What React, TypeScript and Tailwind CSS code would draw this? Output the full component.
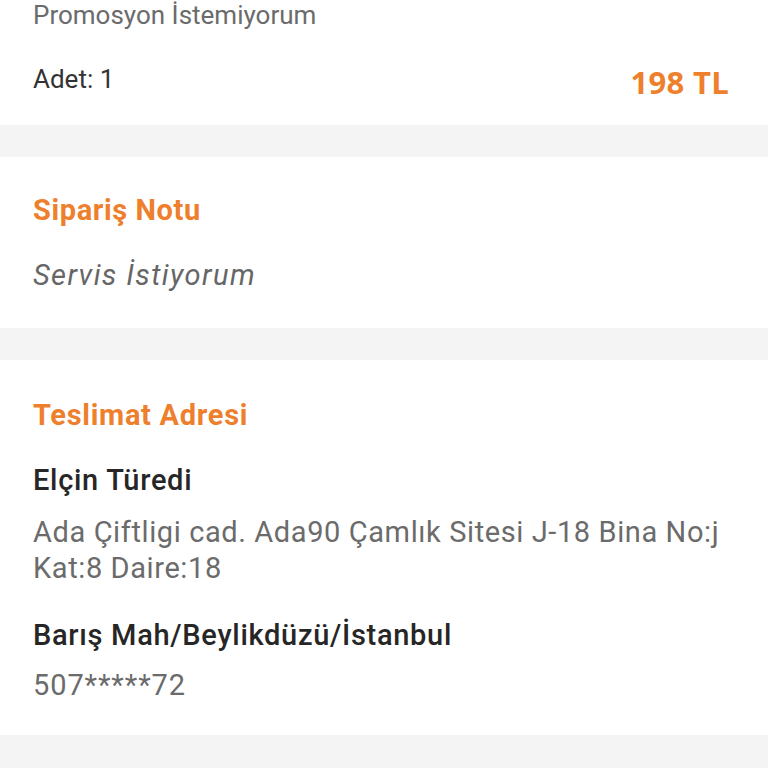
import React from "react";

export default function App() {
  return (
    <div className="w-[768px] h-[768px] overflow-hidden bg-[#f4f4f4]" style={{ fontFamily: "Roboto, 'Noto Sans', sans-serif" }}>
      <div className="bg-white px-[33px] h-[125px] flex flex-col">
        <div className="mt-[-3px] text-[26px] leading-[36px] text-[#6b6b6b]">Promosyon İstemiyorum</div>
        <div className="mt-[28px] flex items-center justify-between h-[36px]">
          <span className="text-[26px] leading-[36px] text-[#333333]">Adet: 1</span>
          <span className="text-[31px] leading-[36px] font-bold text-[#ee7f2d] mr-[6px] mt-[6px] tracking-[0.3px]" style={{ fontFamily: "'Open Sans', sans-serif" }}>198 TL</span>
        </div>
      </div>
      <div className="h-[32px]" />
      <div className="bg-white px-[33px] pt-[35px] h-[171px] flex flex-col">
        <div className="text-[29px] leading-[36px] font-bold tracking-[0.6px] text-[#ee7f2d]">Sipariş Notu</div>
        <div className="mt-[29px] text-[29px] leading-[36px] italic tracking-[1.4px] text-[#666666]">Servis İstiyorum</div>
      </div>
      <div className="h-[32px]" />
      <div className="bg-white px-[33px] pt-[37px] h-[375px] flex flex-col">
        <div className="text-[29px] leading-[36px] font-bold tracking-[0.7px] text-[#ee7f2d]">Teslimat Adresi</div>
        <div className="mt-[29px] text-[29px] leading-[36px] font-medium tracking-[0.7px] text-[#262626]">Elçin Türedi</div>
        <div className="mt-[16px] text-[29px] leading-[36px] tracking-[0.6px] text-[#6b6b6b]">
          <div className="whitespace-nowrap">Ada Çiftligi cad. Ada90 Çamlık Sitesi J-18 Bina No:j</div>
          <div>Kat:8 Daire:18</div>
        </div>
        <div className="mt-[31px] text-[29px] leading-[36px] font-medium tracking-[0.7px] text-[#262626]">Barış Mah/Beylikdüzü/İstanbul</div>
        <div className="mt-[14px] text-[29px] leading-[36px] tracking-[0.9px] text-[#6b6b6b]">507*****72</div>
      </div>
    </div>
  );
}
